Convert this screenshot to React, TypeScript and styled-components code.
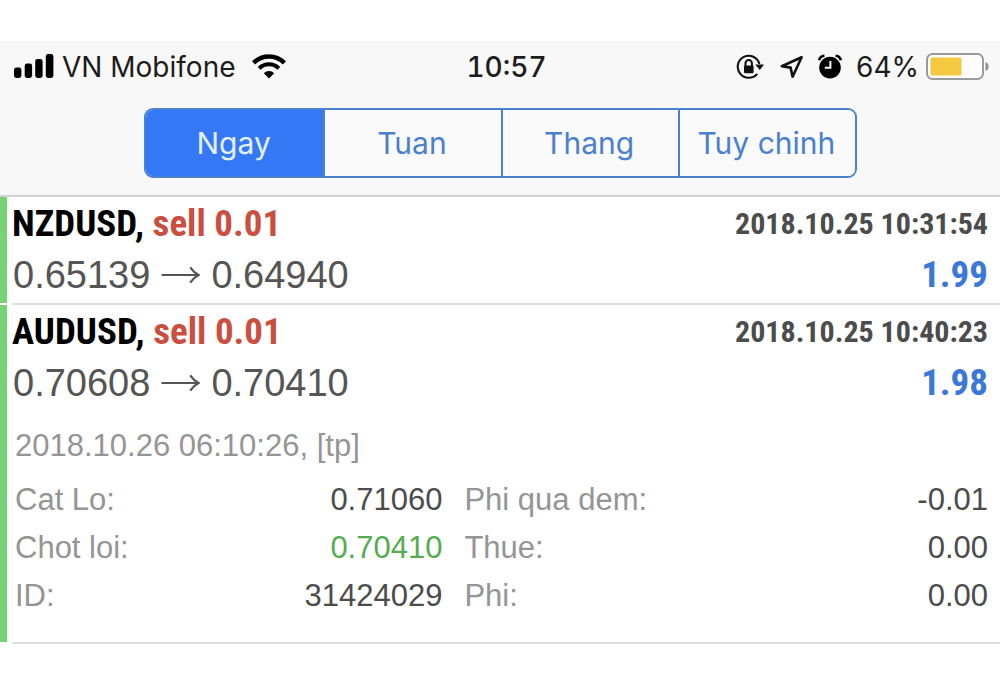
import React, { useState } from "react";
import styled, { createGlobalStyle } from "styled-components";

const condensed = `"Roboto Condensed", "Liberation Sans Narrow", "Liberation Sans", sans-serif`;

const GlobalStyle = createGlobalStyle`
  * { box-sizing: border-box; }
  body {
    margin: 0;
    background: #fff;
    font-family: "Liberation Sans", Arial, sans-serif;
  }
`;

const Page = styled.div`
  padding-top: 41px;
`;

const Header = styled.header`
  background: #f8f8f8;
  border-bottom: 2px solid #d2d2d2;
  padding-bottom: 17px;
`;

const StatusBar = styled.div`
  display: grid;
  grid-template-columns: 1fr auto 1fr;
  align-items: center;
  height: 51px;
  padding: 0 11px 0 14px;
  font-family: Inter, "Liberation Sans", sans-serif;
  font-size: 28px;
  line-height: 50px;
  color: #1c1c1c;
  white-space: nowrap;
`;

const Cluster = styled.div<{ $end?: boolean }>`
  display: flex;
  align-items: center;
  justify-content: ${(p) => (p.$end ? "flex-end" : "flex-start")};
`;

const Carrier = styled.span`
  margin: 0 16px 0 8px;
`;

const Clock = styled.time`
  padding-left: 10px;
  font-weight: 500;
  font-variant-numeric: tabular-nums;
`;

const Charge = styled.span`
  margin: 0 7px 0 14px;
`;

const Glyph = styled.svg<{ $gap?: number }>`
  display: block;
  flex: none;
  margin-right: ${(p) => p.$gap ?? 0}px;
`;

const Tabs = styled.nav`
  display: grid;
  grid-template-columns: repeat(4, 1fr);
  height: 70px;
  margin: 16px 143px 0 144px;
  border: 2px solid #4a82d0;
  border-radius: 9px;
  overflow: hidden;
`;

const Tab = styled.button<{ $active: boolean }>`
  border: 0;
  padding: 0 2px 0 0;
  background: ${(p) => (p.$active ? "#3478f6" : "#fafafb")};
  color: ${(p) => (p.$active ? "#e4f0ff" : "#4a80cc")};
  font-family: Inter, "Liberation Sans", sans-serif;
  font-size: 30px;
  line-height: 40px;
  white-space: nowrap;

  & + & {
    border-left: 2px solid #4a82d0;
  }
`;

const Deal = styled.article`
  border-left: 7px solid #76d275;
  padding: 0 12px 0 5px;
`;

const Divider = styled.hr`
  height: 2px;
  margin: 0 0 0 12px;
  border: 0;
  background: #dfdfdf;
`;

const Line = styled.div`
  display: flex;
  justify-content: space-between;
  align-items: center;
  white-space: nowrap;
`;

const PriceLine = styled(Line)`
  padding: 0 0 4px 1px;
`;

const Symbol = styled.h2`
  margin: 0;
  font: bold 37px/54px ${condensed};
  color: #000;
`;

const Side = styled.span`
  color: #cb4f40;
`;

const OpenTime = styled.time`
  font: bold 30px/54px ${condensed};
  color: #4c4c4c;
`;

const Prices = styled.div`
  display: flex;
  align-items: center;
  gap: 11px;
  font-size: 38px;
  line-height: 48px;
  color: #555;
`;

const Profit = styled.strong`
  font: bold 37px/48px ${condensed};
  color: #3b78d8;
`;

const Details = styled.div`
  padding: 11px 0 22px 3px;
  font-size: 31px;
  line-height: 48px;
  color: #959595;
  white-space: nowrap;
`;

const Closed = styled.p`
  margin: 0 0 6px;
`;

const Fields = styled.dl`
  display: grid;
  grid-template-columns: 427fr 523fr;
  column-gap: 22px;
  margin: 0;
`;

const Field = styled.div`
  display: flex;
  justify-content: space-between;
`;

const Value = styled.dd<{ $hit?: boolean }>`
  margin: 0;
  color: ${(p) => (p.$hit ? "#55ad50" : "#4c4c4c")};
`;

const Arrow = () => (
  <Glyph width="39" height="20" viewBox="0 0 39 20" fill="none" stroke="#555" strokeWidth="2.2" aria-label="to">
    <path d="M0.5 10H37M29.2 2.4Q32.6 7.4 37.6 10Q32.6 12.6 29.2 17.6" />
  </Glyph>
);

const SignalIcon = () => (
  <Glyph width="40" height="26" viewBox="0 0 40 26" fill="#000" aria-hidden="true">
    <rect x="0" y="13.5" width="7.4" height="10.5" rx="2.4" />
    <rect x="10.7" y="9.5" width="7.4" height="14.5" rx="2.4" />
    <rect x="21.2" y="5" width="7.4" height="19" rx="2.4" />
    <rect x="31.8" y="0" width="7.6" height="24" rx="2.4" />
  </Glyph>
);

const WifiIcon = () => (
  <Glyph width="34" height="26" viewBox="0 0 34 26" aria-hidden="true">
    <g fill="none" stroke="#000">
      <path d="M1.6 8.9A21.8 21.8 0 0 1 32.4 8.9" strokeWidth="4.4" />
      <path d="M7.2 14.4A13.9 13.9 0 0 1 26.8 14.4" strokeWidth="4" />
    </g>
    <path d="M11.8 19.2A7.4 7.4 0 0 1 22.2 19.2L17 24.6Z" fill="#000" />
  </Glyph>
);

const RotationLockIcon = () => (
  <Glyph $gap={16} width="28" height="26" viewBox="0 0 28 26" aria-hidden="true">
    <g fill="none" stroke="#111" strokeWidth="2.1">
      <path d="M23.4 10A11 11 0 1 0 21.2 19.8" />
      <path d="M9.5 12V9.2a3.2 3.2 0 0 1 6.4 0V12" />
    </g>
    <rect x="8" y="11.4" width="9.6" height="7.8" rx="1.2" fill="#111" />
    <path d="M19.2 10.4H28L23.8 16Z" fill="#111" />
  </Glyph>
);

const LocationIcon = () => (
  <Glyph $gap={14} width="24" height="26" viewBox="0 0 24 26" fill="none" stroke="#111" strokeWidth="2.6" strokeLinejoin="round" aria-hidden="true">
    <path d="M21.6 3.2L1.8 12.2L10.6 13.6L12.6 22.8Z" />
  </Glyph>
);

const AlarmIcon = () => (
  <Glyph width="24" height="26" viewBox="0 0 24 26" aria-hidden="true">
    <circle cx="12" cy="13.6" r="10.8" fill="#000" />
    <path d="M1.2 6.2Q2 2.2 6.4 1.8M17.6 1.8Q22 2.2 22.8 6.2" fill="none" stroke="#000" strokeWidth="2.6" />
    <path d="M12.4 7V13.8H6.8" fill="none" stroke="#f8f8f8" strokeWidth="2" />
  </Glyph>
);

const BatteryIcon = () => (
  <Glyph width="63" height="28" viewBox="0 0 63 28" aria-hidden="true">
    <rect x="1" y="1" width="56" height="25" rx="5.5" fill="#fdfdfd" stroke="#9b9b9b" strokeWidth="2" />
    <rect x="4.5" y="4.5" width="31" height="18" rx="1.5" fill="#f5c842" />
    <path d="M59.5 9Q62.6 10 62.6 13.5T59.5 18Z" fill="#8f8f8f" />
  </Glyph>
);

const periods = ["Ngay", "Tuan", "Thang", "Tuy chinh"];

type DealInfo = {
  symbol: string;
  side: string;
  opened: string;
  from: string;
  to: string;
  profit: string;
  closed?: string;
  fields?: { label: string; value: string; hit?: boolean }[];
};

const deals: DealInfo[] = [
  { symbol: "NZDUSD", side: "sell 0.01", opened: "2018.10.25 10:31:54", from: "0.65139", to: "0.64940", profit: "1.99" },
  {
    symbol: "AUDUSD",
    side: "sell 0.01",
    opened: "2018.10.25 10:40:23",
    from: "0.70608",
    to: "0.70410",
    profit: "1.98",
    closed: "2018.10.26 06:10:26, [tp]",
    fields: [
      { label: "Cat Lo:", value: "0.71060" },
      { label: "Phi qua dem:", value: "-0.01" },
      { label: "Chot loi:", value: "0.70410", hit: true },
      { label: "Thue:", value: "0.00" },
      { label: "ID:", value: "31424029" },
      { label: "Phi:", value: "0.00" },
    ],
  },
];

export default function App() {
  const [period, setPeriod] = useState(periods[0]);

  return (
    <Page>
      <GlobalStyle />
      <Header>
        <StatusBar>
          <Cluster>
            <SignalIcon />
            <Carrier>VN Mobifone</Carrier>
            <WifiIcon />
          </Cluster>
          <Clock>10:57</Clock>
          <Cluster $end>
            <RotationLockIcon />
            <LocationIcon />
            <AlarmIcon />
            <Charge>64%</Charge>
            <BatteryIcon />
          </Cluster>
        </StatusBar>
        <Tabs>
          {periods.map((name) => (
            <Tab key={name} type="button" $active={name === period} onClick={() => setPeriod(name)}>
              {name}
            </Tab>
          ))}
        </Tabs>
      </Header>
      <main>
        {deals.map((deal) => (
          <React.Fragment key={deal.symbol}>
            <Deal>
              <Line>
                <Symbol>
                  {deal.symbol}, <Side>{deal.side}</Side>
                </Symbol>
                <OpenTime>{deal.opened}</OpenTime>
              </Line>
              <PriceLine>
                <Prices>
                  <span>{deal.from}</span>
                  <Arrow />
                  <span>{deal.to}</span>
                </Prices>
                <Profit>{deal.profit}</Profit>
              </PriceLine>
              {deal.fields && (
                <Details>
                  <Closed>{deal.closed}</Closed>
                  <Fields>
                    {deal.fields.map((field) => (
                      <Field key={field.label}>
                        <dt>{field.label}</dt>
                        <Value $hit={field.hit}>{field.value}</Value>
                      </Field>
                    ))}
                  </Fields>
                </Details>
              )}
            </Deal>
            <Divider />
          </React.Fragment>
        ))}
      </main>
    </Page>
  );
}
